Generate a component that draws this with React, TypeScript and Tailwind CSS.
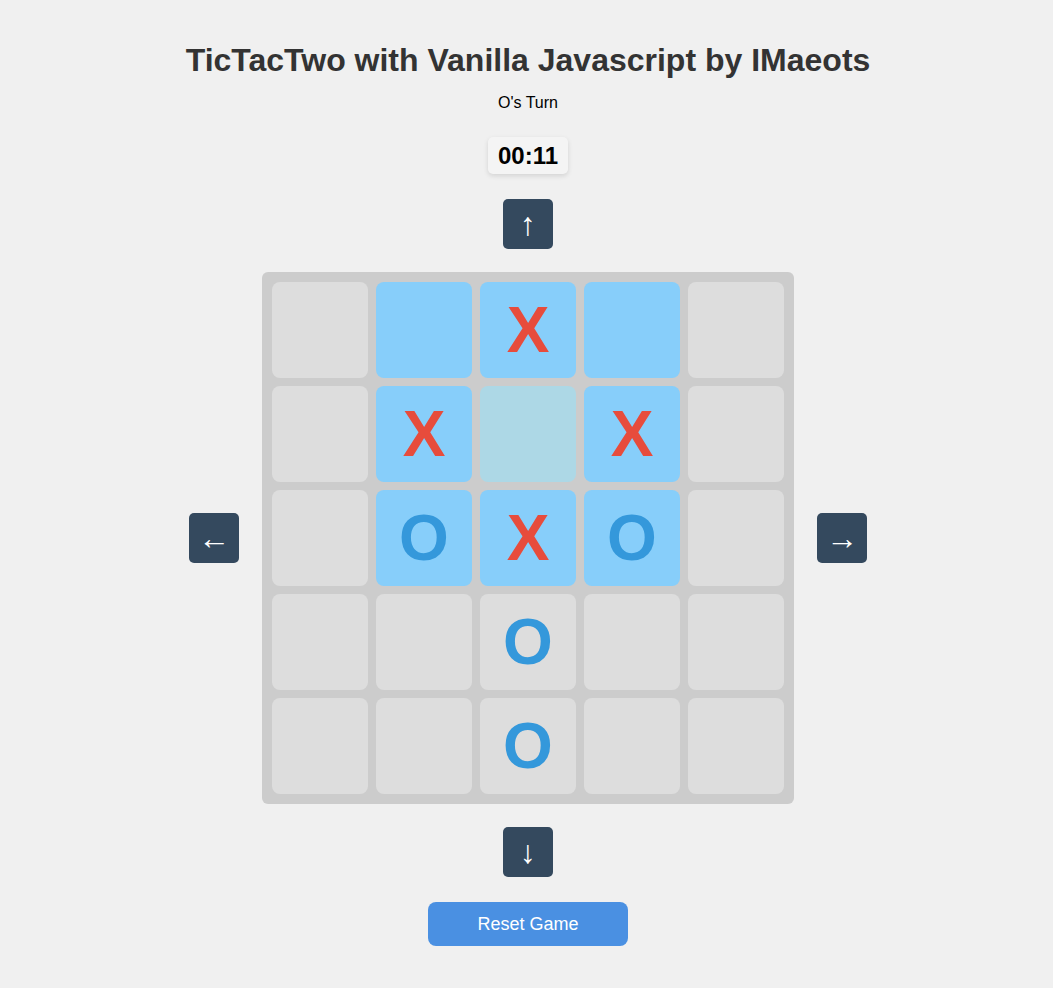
type Cell = { mark: "" | "X" | "O"; tone: "plain" | "active" | "center" };

const p = (mark: Cell["mark"] = ""): Cell => ({ mark, tone: "plain" });
const a = (mark: Cell["mark"] = ""): Cell => ({ mark, tone: "active" });

const board: Cell[][] = [
  [p(), a(), a("X"), a(), p()],
  [p(), a("X"), { mark: "", tone: "center" }, a("X"), p()],
  [p(), a("O"), a("X"), a("O"), p()],
  [p(), p(), p("O"), p(), p()],
  [p(), p(), p("O"), p(), p()],
];

const toneClass = {
  plain: "bg-[#dddddd]",
  active: "bg-[#87cefa]",
  center: "bg-[#add8e6]",
};

const ArrowButton = ({ label }: { label: string }) => (
  <button className="w-[50px] h-[50px] rounded-[5px] bg-[#34495e] text-white text-[32px] leading-none flex items-center justify-center">
    {label}
  </button>
);

export default function App() {
  return (
    <div className="min-h-screen bg-[#f0f0f0] font-['Liberation_Sans',Arial,sans-serif] flex flex-col items-center pt-[42px] pl-[3px]">
      <h1 className="text-[32px] leading-[37px] font-bold text-[#333333]">
        TicTacTwo with Vanilla Javascript by IMaeots
      </h1>
      <p className="mt-[15px] text-[16px] leading-[18px] text-black">O's Turn</p>

      {/* timer */}
      <div className="mt-[25px] px-[10px] h-[37px] flex items-center rounded-[5px] bg-[#f4f4f4] shadow-[0_2px_5px_rgba(0,0,0,0.12)] text-[24px] font-bold text-black">
        00:11
      </div>

      <div className="mt-[25px]">
        <ArrowButton label="↑" />
      </div>

      <div className="mt-[23px] flex items-center gap-[23px]">
        <ArrowButton label="←" />
        <div className="grid grid-cols-5 gap-[8px] p-[10px] bg-[#cccccc] rounded-[6px]">
          {board.flat().map((cell, i) => (
            <div
              key={i}
              className={`w-[96px] h-[96px] rounded-[8px] flex items-center justify-center text-[64px] font-bold leading-none ${toneClass[cell.tone]} ${
                cell.mark === "X" ? "text-[#e74c3c]" : "text-[#3498db]"
              }`}
            >
              {cell.mark}
            </div>
          ))}
        </div>
        <ArrowButton label="→" />
      </div>

      <div className="mt-[23px]">
        <ArrowButton label="↓" />
      </div>

      <button className="mt-[25px] w-[200px] h-[44px] rounded-[8px] bg-[#4a90e2] text-white text-[18px]">
        Reset Game
      </button>
    </div>
  );
}
